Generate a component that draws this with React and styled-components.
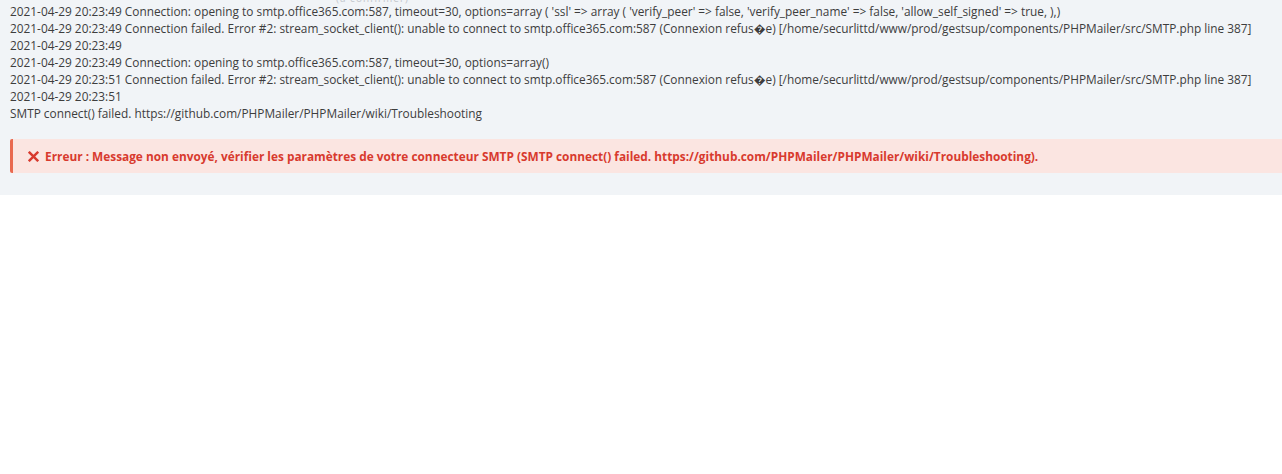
import React from 'react';
import styled, { createGlobalStyle } from 'styled-components';

const GlobalStyle = createGlobalStyle`
  body {
    margin: 0;
    background: #ffffff;
    font-family: "Open Sans", "Liberation Sans", sans-serif;
  }
`;

const Panel = styled.div`
  background: #f1f4f7;
  padding: 3px 0 22px 10px;
  overflow: hidden;
`;

const Clipped = styled.div`
  height: 0;
  position: relative;
`;

const Ghost = styled.span`
  position: absolute;
  top: -11px;
  left: 326px;
  font-size: 10px;
  line-height: 12px;
  color: #c3c7cc;
  letter-spacing: 1px;
`;

const Log = styled.div`
  font-size: 11.85px;
  line-height: 17px;
  color: #3d3d3d;
`;

const Line = styled.div`
  white-space: nowrap;
`;

const Alert = styled.div`
  margin-top: 17px;
  display: flex;
  align-items: center;
  gap: 6px;
  height: 34px;
  padding-left: 15px;
  background: #fbe5e1;
  border-left: 3px solid #e9694f;
  border-radius: 2px 0 0 2px;
  color: #d83a2e;
  font-size: 11.85px;
  font-weight: 700;
  white-space: nowrap;
`;

const Cross = styled.svg`
  width: 11px;
  height: 11px;
  flex: none;
`;

const lines = [
  "2021-04-29 20:23:49 Connection: opening to smtp.office365.com:587, timeout=30, options=array ( 'ssl' => array ( 'verify_peer' => false, 'verify_peer_name' => false, 'allow_self_signed' => true, ),)",
  "2021-04-29 20:23:49 Connection failed. Error #2: stream_socket_client(): unable to connect to smtp.office365.com:587 (Connexion refus\uFFFDe) [/home/securlittd/www/prod/gestsup/components/PHPMailer/src/SMTP.php line 387]",
  "2021-04-29 20:23:49",
  "2021-04-29 20:23:49 Connection: opening to smtp.office365.com:587, timeout=30, options=array()",
  "2021-04-29 20:23:51 Connection failed. Error #2: stream_socket_client(): unable to connect to smtp.office365.com:587 (Connexion refus\uFFFDe) [/home/securlittd/www/prod/gestsup/components/PHPMailer/src/SMTP.php line 387]",
  "2021-04-29 20:23:51",
  "SMTP connect() failed. https://github.com/PHPMailer/PHPMailer/wiki/Troubleshooting",
];

const App = () => (
  <>
    <GlobalStyle />
    <Panel>
      <Clipped>
        <Ghost>(à confirmer)</Ghost>
      </Clipped>
      <Log>
        {lines.map((l, i) => (
          <Line key={i}>{l}</Line>
        ))}
      </Log>
      <Alert>
        <Cross viewBox="0 0 10 10">
          <path d="M1.5 1.5 L8.5 8.5 M8.5 1.5 L1.5 8.5" stroke="#d83a2e" strokeWidth="2.2" strokeLinecap="square" />
        </Cross>
        <span>
          Erreur : Message non envoyé, vérifier les paramètres de votre connecteur SMTP (SMTP connect() failed. https://github.com/PHPMailer/PHPMailer/wiki/Troubleshooting).
        </span>
      </Alert>
    </Panel>
  </>
);

export default App;
